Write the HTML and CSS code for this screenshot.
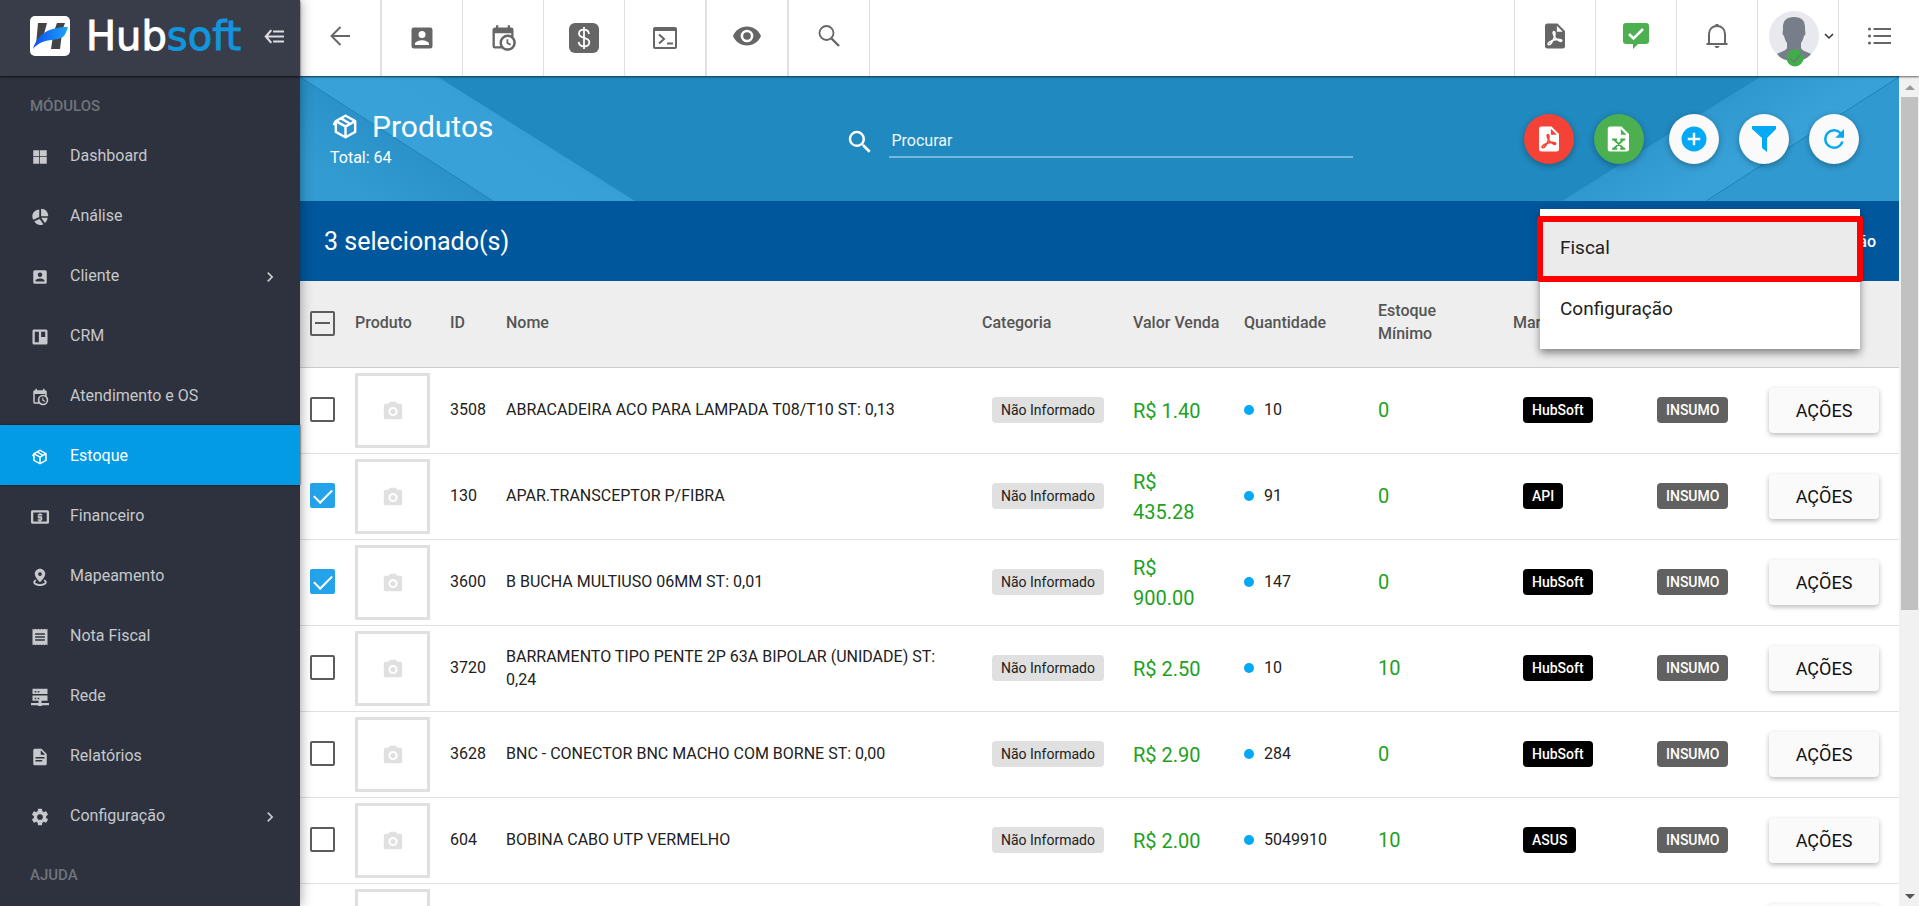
FILE: index.html
```html
<!DOCTYPE html>
<html lang="pt-BR">
<head>
<meta charset="utf-8">
<title>Hubsoft - Produtos</title>
<link rel="stylesheet" href="styles.css">
</head>
<body>
<svg class="sprite" aria-hidden="true">
  <symbol id="i-contact" viewBox="0 0 24 24"><path d="M6 17c0-2 4-3.100 6-3.100s6 1.100 6 3.100v1H6m9-9a3 3 0 0 1-3 3 3 3 0 0 1-3-3 3 3 0 0 1 3-3 3 3 0 0 1 3 3M3 5v14a2 2 0 0 0 2 2h14a2 2 0 0 0 2-2V5a2 2 0 0 0-2-2H5a2 2 0 0 0-2 2z"/></symbol>
  <symbol id="i-calendar" viewBox="0 0 24 24"><path d="M15 13h1.500v2.820l2.440 1.410-.750 1.300L15 16.690V13m4-5H5v11h4.670c-.430-.910-.670-1.930-.670-3a7 7 0 0 1 7-7c1.070 0 2.090.240 3 .670V8M5 21a2 2 0 0 1-2-2V5c0-1.110.890-2 2-2h1V1h2v2h8V1h2v2h1a2 2 0 0 1 2 2v6.100c1.240 1.260 2 2.990 2 4.900a7 7 0 0 1-7 7c-1.910 0-3.640-.760-4.900-2H5m11-9.850A4.850 4.850 0 0 0 11.150 16c0 2.680 2.170 4.850 4.850 4.850A4.850 4.850 0 0 0 20.850 16c0-2.680-2.170-4.850-4.850-4.850z"/></symbol>
  <symbol id="i-box" viewBox="0 0 24 24"><path d="M2 10.960a.985.985 0 0 1-.370-1.370L3.130 7c.110-.200.280-.340.470-.420l7.830-4.400c.160-.120.360-.180.570-.180s.410.060.570.180l7.900 4.440c.190.100.350.260.440.460l.090.300V16.500c0 .380-.210.710-.530.880l-7.900 4.440c-.160.120-.360.180-.570.180s-.410-.060-.570-.180l-7.900-4.440A.991.991 0 0 1 3 16.500V10.960M12 4.150l-1.890 1.070L16 8.610 17.960 7.500 12 4.150M6.040 7.500 12 10.850l1.960-1.100-5.880-3.400L6.040 7.500M5 15.910l6 3.380v-6.710L5 9.210v6.700m14 0v-6.700l-6 3.370v6.710l6-3.380z"/></symbol>
  <symbol id="i-search" viewBox="0 0 24 24"><path d="M9.500 3A6.500 6.500 0 0 1 16 9.500c0 1.610-.590 3.090-1.560 4.230l.270.270h.790l5 5-1.500 1.500-5-5v-.790l-.270-.270A6.516 6.516 0 0 1 9.500 16 6.500 6.500 0 0 1 3 9.500 6.500 6.500 0 0 1 9.500 3m0 2C7 5 5 7 5 9.500S7 14 9.500 14 14 12 14 9.500 12 5 9.500 5z"/></symbol>
  <symbol id="i-pdf" viewBox="0 0 24 24"><path fill-rule="evenodd" d="M14 2H6a2 2 0 0 0-2 2v16a2 2 0 0 0 2 2h12a2 2 0 0 0 2-2V8l-6-6zM13.500 3.800 18.200 8.500H13.500z"/><path class="cut" d="M10.800 8.600c1.500-.5 1.500 2.200.6 4.600-.9 2.500-3 6.300-4.600 5.700-1.500-.7 1.800-3.200 5.200-3.900 2.700-.5 5.600-.3 5.400.9-.3 1.200-3.500-.4-5.200-2.600-1.300-1.800-2.200-4.400-1.400-4.700z"/></symbol>
  <symbol id="i-camera" viewBox="0 0 24 24"><path fill-rule="evenodd" d="M4 4h3l2-2h6l2 2h3a2 2 0 0 1 2 2v13a2 2 0 0 1-2 2H4a2 2 0 0 1-2-2V6a2 2 0 0 1 2-2m8 3.500a5 5 0 0 0-5 5 5 5 0 0 0 5 5 5 5 0 0 0 5-5 5 5 0 0 0-5-5z"/><circle cx="12" cy="12.500" r="2.800"/></symbol>
  <symbol id="i-chevron" viewBox="0 0 24 24"><path d="M8.590 16.580 13.170 12 8.590 7.410 10 6l6 6-6 6-1.410-1.420z"/></symbol>
</svg>

<div class="app">
  <aside class="sidebar">
    <header class="brand">
      <svg class="brand-mark" viewBox="0 0 40 40" aria-hidden="true">
        <defs><linearGradient id="swoosh" x1="0" x2="1"><stop offset="0" stop-color="#0a4ef0"/><stop offset="1" stop-color="#1ea4fa"/></linearGradient></defs>
        <rect width="40" height="40" rx="5" fill="#fff"/>
        <path fill="#444" d="M8 7h9l-3 11-4 3-4 8zM27 7h8l-3 8H24zM23 20l9-3-2 16h-9z"/>
        <path fill="url(#swoosh)" d="M3 33C8 17 20 11 38 11c-2 6-3 9-7 11-7 3-19 0-28 11z"/>
      </svg>
      <span class="brand-name">Hub<span class="brand-accent">soft</span></span>
      <button class="icon-button collapse" aria-label="Recolher menu">
        <svg viewBox="0 0 22 16"><path d="M8 1 2 8l6 7M3 8h19M10 2.500h12M10 13.500h12" fill="none" stroke="currentColor" stroke-width="2.400"/></svg>
      </button>
    </header>
    <nav class="nav">
      <h2 class="nav-title">MÓDULOS</h2>
      <a class="nav-item" href="#"><svg viewBox="0 0 24 24"><path d="M3 11h8V3H3m0 18h8v-9H3m9 9h9v-9h-9m0-9v8h9V3"/></svg><span>Dashboard</span></a>
      <a class="nav-item" href="#"><svg viewBox="0 0 24 24"><path d="M11 2v10L3 15.500C-.500 9 4 2.500 11 2zM13.500 1C19 1 23 5 23 11h-9.500zM13.500 13H22c0 3-1.500 5.500-3.500 7l-5-7zM11.500 14.500l5 7c-4.500 2.500-9.500.8-12-4z"/></svg><span>Análise</span></a>
      <a class="nav-item" href="#"><svg><use href="#i-contact"/></svg><span>Cliente</span><svg class="nav-arrow"><use href="#i-chevron"/></svg></a>
      <a class="nav-item" href="#"><svg viewBox="0 0 24 24"><path fill-rule="evenodd" d="M4 2h16a2 2 0 0 1 2 2v16a2 2 0 0 1-2 2H4a2 2 0 0 1-2-2V4c0-1.100.9-2 2-2zM5 5v14h5.500V5zM13.500 5v7H19V5z"/></svg><span>CRM</span></a>
      <a class="nav-item" href="#"><svg><use href="#i-calendar"/></svg><span>Atendimento e OS</span></a>
      <a class="nav-item active" href="#" aria-current="page"><svg><use href="#i-box"/></svg><span>Estoque</span></a>
      <a class="nav-item" href="#"><svg viewBox="0 0 24 24"><path fill-rule="evenodd" d="M2 3h20a2 2 0 0 1 2 2v14a2 2 0 0 1-2 2H2a2 2 0 0 1-2-2V5c0-1.100.9-2 2-2zm1 3v12h18V6zM11 7h2v1h2v2h-5v1h4l1 1v4l-1 1h-1v1h-2v-1H9v-2h4v-1h-3l-1-1V9l1-1h1z"/></svg><span>Financeiro</span></a>
      <a class="nav-item" href="#"><svg viewBox="0 0 24 24"><path d="M12 1c3.900 0 7 3.100 7 6.800C19 13 12 19 12 19S5 13 5 7.800C5 4.100 8.100 1 12 1m0 4.500a2.400 2.400 0 0 0 0 5 2.400 2.400 0 0 0 0-5M21 19c0 2.800-4 5-9 5s-9-2.200-9-5c0-1.500 1.100-2.900 3-3.800l1.200 1.700c-1 .5-1.700 1.200-1.700 1.900 0 1.500 3 2.700 6.500 2.700s6.500-1.200 6.500-2.700c0-.7-.7-1.400-1.700-1.900l1.200-1.700c1.900.9 3 2.300 3 3.800z"/></svg><span>Mapeamento</span></a>
      <a class="nav-item" href="#"><svg viewBox="0 0 24 24"><path fill-rule="evenodd" d="M2 1l2 1 2-1 2 1 2-1 2 1 2-1 2 1 2-1 2 1 2-1v22l-2-1-2 1-2-1-2 1-2-1-2 1-2-1-2 1-2-1-2 1zM5.500 7v2h13V7zM5.500 11v2h13v-2zM5.500 15v2h13v-2z"/></svg><span>Nota Fiscal</span></a>
      <a class="nav-item" href="#"><svg viewBox="0 0 24 24"><path fill-rule="evenodd" d="M2 1h20v7H2zM2 10h20v7H2zM5 4v2h2V4zM9 4v2h2V4zM5 13v2h2v-2zM9 13v2h2v-2zM10 17h4v3h10v3h-9l-1 1h-4l-1-1H0v-3h10z"/></svg><span>Rede</span></a>
      <a class="nav-item" href="#"><svg viewBox="0 0 24 24"><path fill-rule="evenodd" d="M14 1H5a2 2 0 0 0-2 2v18a2 2 0 0 0 2 2h14a2 2 0 0 0 2-2V8zM13 3l6 6h-6zM6 12v2h12v-2zM6 16v2h9v-2z"/></svg><span>Relatórios</span></a>
      <a class="nav-item" href="#"><svg viewBox="1 1 22 22"><path d="M12 15.500A3.500 3.500 0 0 1 8.500 12 3.500 3.500 0 0 1 12 8.500a3.500 3.500 0 0 1 3.500 3.500 3.500 3.500 0 0 1-3.500 3.500m7.430-2.530c.040-.320.070-.640.070-.970s-.030-.660-.070-1l2.110-1.630c.190-.150.240-.420.120-.640l-2-3.460c-.120-.220-.390-.310-.610-.220l-2.490 1c-.520-.390-1.060-.730-1.690-.980l-.370-2.650A.506.506 0 0 0 14 2h-4c-.250 0-.460.180-.500.420l-.370 2.650c-.630.250-1.170.590-1.690.980l-2.490-1c-.220-.090-.490 0-.610.220l-2 3.460c-.130.220-.070.490.120.640L4.570 11c-.040.340-.070.670-.070 1s.030.650.070.970l-2.110 1.660c-.190.150-.250.420-.120.640l2 3.460c.120.220.390.300.610.220l2.490-1.010c.520.400 1.060.740 1.690.990l.370 2.650c.040.240.250.420.500.420h4c.250 0 .460-.180.500-.420l.370-2.650c.630-.260 1.170-.590 1.690-.990l2.490 1.010c.220.080.490 0 .610-.220l2-3.460c.120-.220.070-.490-.120-.640l-2.110-1.660z"/></svg><span>Configuração</span><svg class="nav-arrow"><use href="#i-chevron"/></svg></a>
      <h2 class="nav-title">AJUDA</h2>
    </nav>
  </aside>

  <div class="workspace">
    <header class="topbar">
      <button class="tool strong" aria-label="Voltar"><svg viewBox="0 0 20 20"><path d="M20 10H2M10.500 1 1.500 10l9 9" fill="none" stroke="currentColor" stroke-width="2"/></svg></button>
      <button class="tool low" aria-label="Clientes"><svg class="i-28"><use href="#i-contact"/></svg></button>
      <button class="tool low" aria-label="Agenda"><svg class="i-28"><use href="#i-calendar"/></svg></button>
      <button class="tool low" aria-label="Financeiro"><svg class="i-30" viewBox="0 0 30 30"><rect width="30" height="30" rx="6"/><path d="M20 11c-.4-3-2.300-4.300-5-4.300s-5 1.400-5 4.100c0 5.400 10.300 2.800 10.300 8.300 0 2.800-2.300 4.400-5.200 4.400S10 22 9.600 18.900M15 4v22" fill="none" stroke="#fff" stroke-width="1.800"/></svg></button>
      <button class="tool low strong" aria-label="Terminal"><svg class="i-28" viewBox="0 0 28 28"><path fill-rule="evenodd" d="M4 3h20a2 2 0 0 1 2 2v18a2 2 0 0 1-2 2H4a2 2 0 0 1-2-2V5c0-1.100.9-2 2-2zm0 4v16h20V7z"/><path d="m8 10.500 5 4.500-5 4.500M16 19.500h6" fill="none" stroke="currentColor" stroke-width="2"/></svg></button>
      <button class="tool strong" aria-label="Visualizar"><svg class="i-28" viewBox="1 1 22 22"><path d="M12 9a3 3 0 0 0-3 3 3 3 0 0 0 3 3 3 3 0 0 0 3-3 3 3 0 0 0-3-3m0 8a5 5 0 0 1-5-5 5 5 0 0 1 5-5 5 5 0 0 1 5 5 5 5 0 0 1-5 5m0-12.500C7 4.500 2.730 7.610 1 12c1.730 4.390 6 7.500 11 7.500s9.270-3.110 11-7.500c-1.730-4.390-6-7.500-11-7.500z"/></svg></button>
      <button class="tool" aria-label="Buscar"><svg class="i-22" viewBox="0 0 22 22"><circle cx="8.500" cy="8" r="7" fill="none" stroke="currentColor" stroke-width="1.800"/><path d="m13.500 13.500 7.500 7.500" stroke="currentColor" stroke-width="2.400"/></svg></button>
      <div class="tools-end">
        <button class="tool" aria-label="Relatórios PDF"><svg class="i-30"><use href="#i-pdf"/></svg></button>
        <button class="tool" aria-label="Mensagens"><svg class="i-26" viewBox="0 0 26 26"><path fill="#4caf50" d="M3 0h20a3 3 0 0 1 3 3v15a3 3 0 0 1-3 3h-8l-5 5v-5H3a3 3 0 0 1-3-3V3a3 3 0 0 1 3-3z"/><path d="m6 11 4.500 4.500L20 6" fill="none" stroke="#fff" stroke-width="2.600"/></svg></button>
        <button class="tool" aria-label="Notificações"><svg class="i-26" viewBox="0 0 26 26"><path d="M2.500 21h21M5 20V11c0-5 3.500-8 8-8s8 3 8 8v9" fill="none" stroke="currentColor" stroke-width="2"/><path d="M11.500 1h3v2h-3zM10.500 23h5c-.5 1.500-1.500 2-2.500 2s-2-.5-2.500-2z"/></svg></button>
        <button class="tool profile" aria-label="Perfil">
          <svg class="avatar" viewBox="0 0 50 56"><circle cx="25" cy="25" r="25" fill="#e8e9ee"/><path fill="#777e8a" d="M25 6c-8 0-11.500 4-11 12l-.5 5 1.500 2c1 4 2 5.500 3 7v5c-1 3-7 4-10 6 4 5 10 7 17 7s13-2 17-7c-3-2-9-3-10-6v-5c1-1.500 2-3 3-7l1.500-2-.5-5c.5-8-3-12-11-12z"/><circle cx="26" cy="47" r="8.500" fill="#3fae46"/><path d="m21 47 4 4 7-8" fill="none" stroke="#6c7881" stroke-width="1.500"/></svg>
          <svg class="caret" viewBox="0 0 10 10"><path d="m1 3 4 4 4-4" fill="none" stroke="#333" stroke-width="1.500"/></svg>
        </button>
        <button class="tool" aria-label="Lista"><svg class="i-24" viewBox="0 0 24 20"><path d="M6.500 3H24M6.500 10H24M6.500 17H24" stroke="currentColor" stroke-width="2"/><circle cx="2.500" cy="3" r="1.600"/><circle cx="2.500" cy="10" r="1.600"/><circle cx="2.500" cy="17" r="1.600"/></svg></button>
      </div>
    </header>

    <div class="scroll-area">
      <main class="page">
        <section class="page-header">
          <svg class="rays rays-left" viewBox="0 0 335 124" aria-hidden="true">
            <defs>
              <linearGradient id="band" gradientUnits="userSpaceOnUse" x1="198" y1="90" x2="240" y2="24"><stop offset="0" stop-color="#38a1d8"/><stop offset=".45" stop-color="#36a0d7"/><stop offset="1" stop-color="#2e98cf"/></linearGradient>
              <linearGradient id="corner" gradientUnits="userSpaceOnUse" x1="60" y1="118" x2="97" y2="62"><stop offset="0" stop-color="#329bd2"/><stop offset="1" stop-color="#2a92c8"/></linearGradient>
            </defs>
            <path fill="url(#band)" d="M0 0h138l197 124H0z"/>
            <path fill="url(#corner)" d="M0 0l193 124H0z"/>
            <path d="m0 0 193 124" stroke="#1f83b9"/>
          </svg>
          <svg class="rays rays-right" viewBox="0 0 337 124" aria-hidden="true">
            <defs><linearGradient id="bandr" gradientUnits="userSpaceOnUse" x1="85" y1="50" x2="125" y2="114"><stop offset="0" stop-color="#2c95cc"/><stop offset="1" stop-color="#38a1d8"/></linearGradient></defs>
            <path fill="url(#bandr)" d="M198 0h139v124H0z"/>
            <path fill="#2f99d0" d="M337 0v124H144z"/>
            <path d="M337 0 144 124" stroke="#1f83b9"/>
          </svg>
          <div class="heading">
            <h1 class="title"><svg><use href="#i-box"/></svg>Produtos</h1>
            <p class="total">Total: 64</p>
          </div>
          <div class="search">
            <label for="q" aria-label="Procurar"><svg><use href="#i-search"/></svg></label>
            <input id="q" type="text" placeholder="Procurar">
          </div>
          <div class="fabs">
            <button class="fab red" aria-label="Exportar PDF"><svg class="i-30"><use href="#i-pdf"/></svg></button>
            <button class="fab green" aria-label="Exportar planilha"><svg class="i-30" viewBox="0 0 24 24"><path fill-rule="evenodd" d="M14 2H5a2 2 0 0 0-2 2v16a2 2 0 0 0 2 2h13a2 2 0 0 0 2-2V8zM13.500 4 18 8.500h-4.500z"/><path d="m8 12.500 7.500 7M15.500 12.500 8 19.500M6.500 12.300h4M13 12.300h4M6.500 19.700h4M13 19.700h4" fill="none" stroke="#3fae46" stroke-width="1.600"/></svg></button>
            <button class="fab gap" aria-label="Adicionar"><svg class="i-30" viewBox="0 0 24 24"><path d="M17 13h-4v4h-2v-4H7v-2h4V7h2v4h4m-5-9A10 10 0 0 0 2 12a10 10 0 0 0 10 10 10 10 0 0 0 10-10A10 10 0 0 0 12 2z"/></svg></button>
            <button class="fab" aria-label="Filtrar"><svg class="i-26" viewBox="0 0 26 26"><path d="M1 0h24v3l-9 9v14l-5-4V12L1 3z"/></svg></button>
            <button class="fab" aria-label="Atualizar"><svg class="i-30" viewBox="0 0 24 24"><path d="M17.650 6.350A7.958 7.958 0 0 0 12 4a8 8 0 0 0-8 8 8 8 0 0 0 8 8c3.730 0 6.840-2.550 7.730-6h-2.080A5.990 5.990 0 0 1 12 18a6 6 0 0 1-6-6 6 6 0 0 1 6-6c1.660 0 3.140.690 4.220 1.780L13 11h7V4l-2.350 2.350z"/></svg></button>
          </div>
        </section>

        <section class="selection">
          <h2 class="selection-count">3 selecionado(s)</h2>
          <button class="selection-action">Ação</button>
          <div class="menu" role="menu">
            <button class="menu-item highlighted" role="menuitem">Fiscal</button>
            <button class="menu-item" role="menuitem">Configuração</button>
          </div>
        </section>

        <table class="products">
          <colgroup><col class="c-check"><col class="c-photo"><col class="c-id"><col><col class="c-category"><col class="c-price"><col class="c-qty"><col class="c-min"><col class="c-brand"><col class="c-type"><col class="c-actions"></colgroup>
          <thead>
            <tr><th><input class="check partial" type="checkbox" aria-label="Selecionar todos"></th><th>Produto</th><th>ID</th><th>Nome</th><th>Categoria</th><th>Valor Venda</th><th>Quantidade</th><th class="min">Estoque Mínimo</th><th>Marca</th><th></th><th></th></tr>
          </thead>
          <tbody>
            <tr><td><input class="check" type="checkbox" aria-label="Selecionar 3508"></td><td><div class="photo"><svg><use href="#i-camera"/></svg></div></td><td class="text">3508</td><td class="text name">ABRACADEIRA ACO PARA LAMPADA T08/T10 ST: 0,13</td><td><span class="badge">Não Informado</span></td><td class="price">R$ 1.40</td><td><span class="qty">10</span></td><td class="amount">0</td><td><span class="badge brand-badge">HubSoft</span></td><td><span class="badge type">INSUMO</span></td><td><button class="action">AÇÕES</button></td></tr>
            <tr><td><input class="check" type="checkbox" checked aria-label="Selecionar 130"></td><td><div class="photo"><svg><use href="#i-camera"/></svg></div></td><td class="text">130</td><td class="text name">APAR.TRANSCEPTOR P/FIBRA</td><td><span class="badge">Não Informado</span></td><td class="price">R$ 435.28</td><td><span class="qty">91</span></td><td class="amount">0</td><td><span class="badge brand-badge">API</span></td><td><span class="badge type">INSUMO</span></td><td><button class="action">AÇÕES</button></td></tr>
            <tr><td><input class="check" type="checkbox" checked aria-label="Selecionar 3600"></td><td><div class="photo"><svg><use href="#i-camera"/></svg></div></td><td class="text">3600</td><td class="text name">B BUCHA MULTIUSO 06MM ST: 0,01</td><td><span class="badge">Não Informado</span></td><td class="price">R$ 900.00</td><td><span class="qty">147</span></td><td class="amount">0</td><td><span class="badge brand-badge">HubSoft</span></td><td><span class="badge type">INSUMO</span></td><td><button class="action">AÇÕES</button></td></tr>
            <tr><td><input class="check" type="checkbox" aria-label="Selecionar 3720"></td><td><div class="photo"><svg><use href="#i-camera"/></svg></div></td><td class="text">3720</td><td class="text name">BARRAMENTO TIPO PENTE 2P 63A BIPOLAR (UNIDADE) ST: 0,24</td><td><span class="badge">Não Informado</span></td><td class="price">R$ 2.50</td><td><span class="qty">10</span></td><td class="amount">10</td><td><span class="badge brand-badge">HubSoft</span></td><td><span class="badge type">INSUMO</span></td><td><button class="action">AÇÕES</button></td></tr>
            <tr><td><input class="check" type="checkbox" aria-label="Selecionar 3628"></td><td><div class="photo"><svg><use href="#i-camera"/></svg></div></td><td class="text">3628</td><td class="text name">BNC - CONECTOR BNC MACHO COM BORNE ST: 0,00</td><td><span class="badge">Não Informado</span></td><td class="price">R$ 2.90</td><td><span class="qty">284</span></td><td class="amount">0</td><td><span class="badge brand-badge">HubSoft</span></td><td><span class="badge type">INSUMO</span></td><td><button class="action">AÇÕES</button></td></tr>
            <tr><td><input class="check" type="checkbox" aria-label="Selecionar 604"></td><td><div class="photo"><svg><use href="#i-camera"/></svg></div></td><td class="text">604</td><td class="text name">BOBINA CABO UTP VERMELHO</td><td><span class="badge">Não Informado</span></td><td class="price">R$ 2.00</td><td><span class="qty">5049910</span></td><td class="amount">10</td><td><span class="badge brand-badge">ASUS</span></td><td><span class="badge type">INSUMO</span></td><td><button class="action">AÇÕES</button></td></tr>
            <tr><td></td><td><div class="photo"></div></td><td></td><td></td><td></td><td></td><td></td><td></td><td></td><td></td><td><button class="action" aria-label="Ações"></button></td></tr>
          </tbody>
        </table>
      </main>
      <div class="scrollbar" aria-hidden="true"><i class="arrow up"></i><div class="track"><div class="thumb"></div></div><i class="arrow down"></i></div>
    </div>
  </div>
</div>
</body>
</html>
```
FILE: styles.css
```css
* { box-sizing: border-box; }

body {
  margin: 0;
  font-family: Roboto, "Liberation Sans", sans-serif;
  font-size: 16px;
  color: #212121;
}

h1, h2, p { margin: 0; font-weight: 400; }
button { font: inherit; border: 0; padding: 0; background: none; color: inherit; }
svg { fill: currentColor; display: block; flex: none; }
.sprite { position: absolute; width: 0; height: 0; }
.cut { fill: none; stroke: var(--cut, #fff); stroke-width: 1.3px; }

.i-22 { width: 22px; height: 22px; }
.i-24 { width: 24px; height: 20px; }
.i-26 { width: 26px; height: 26px; }
.i-28 { width: 28px; height: 28px; }
.i-30 { width: 30px; height: 30px; }

.app { display: flex; height: 100vh; overflow: hidden; }

/* Sidebar */
.sidebar {
  position: relative;
  z-index: 2;
  flex: 0 0 300px;
  background: #2d323e;
  color: #c6c8cb;
  box-shadow: 0 0 12px rgba(0, 0, 0, .4);
}
.brand {
  display: flex;
  align-items: center;
  height: 76px;
  padding: 0 16px 4px 30px;
  background: #393c49;
  box-shadow: 0 1px 2px rgba(0, 0, 0, .7);
}
.brand-mark { width: 40px; height: 40px; }
.brand-name {
  flex: 1;
  padding-left: 16px;
  font: 40px/40px "DejaVu Sans", sans-serif;
  -webkit-text-stroke: 1px;
  color: #fff;
}
.brand-accent { color: #1295dc; }
.collapse svg { width: 20px; height: 15px; color: #dcdde0; }

.nav-title {
  padding: 21px 30px 9px;
  font-size: 15px;
  line-height: 19px;
  font-weight: 500;
  color: #70747c;
}
.nav-item {
  display: flex;
  align-items: center;
  height: 60px;
  padding: 0 20px 0 31px;
  color: inherit;
  text-decoration: none;
}
.nav-item svg { width: 18px; height: 18px; margin-top: 4px; }
.nav-item span { flex: 1; padding-left: 21px; }
.nav-item .nav-arrow { width: 20px; height: 20px; }
.nav-item.active {
  background: #039be5;
  color: #fff;
  box-shadow: 0 0 2px #111;
}

/* Top bar */
.workspace { flex: 1; min-width: 0; display: flex; flex-direction: column; }
.topbar {
  position: relative;
  z-index: 1;
  display: flex;
  flex: 0 0 76px;
  background: #fff;
  color: #666;
  box-shadow: 0 1px 2px rgba(0, 0, 0, .6);
}
.tool {
  display: flex;
  align-items: center;
  justify-content: center;
  width: 81px;
  padding-bottom: 4px;
  border-right: 1px solid #e0e0e0;
}
.tool.low { padding-bottom: 0; }
.tool.strong { width: 82px; border-right-width: 2px; }
.tool > svg:not([class]) { width: 20px; height: 20px; }
.tools-end { display: flex; margin-left: auto; }
.tools-end .tool { border-right: 0; border-left: 1px solid #e0e0e0; }
.profile { gap: 5px; padding-left: 6px; }
.avatar { width: 50px; height: 56px; margin-top: 6px; }
.caret { width: 10px; height: 10px; }

/* Content */
.scroll-area { flex: 1; min-height: 0; display: flex; }
.page { flex: 1; min-width: 0; overflow: hidden; background: #fff; }

.page-header {
  position: relative;
  display: grid;
  grid-template-columns: 1fr 516px 1fr;
  align-items: center;
  height: 125px;
  padding: 0 40px 0 30px;
  background: #2089bf;
  color: #fff;
}
.page-header > * { position: relative; }
.page-header > .rays { position: absolute; top: 1px; height: 124px; }
.rays-left { left: 0; }
.rays-right { right: 0; }
.title {
  display: flex;
  align-items: center;
  gap: 12px;
  padding-left: 1px;
  font-size: 30px;
  line-height: 38px;
}
.title svg { width: 29px; height: 29px; }
.total { line-height: 24px; }
.search { display: flex; align-items: center; gap: 14px; padding: 6px 0 0 8px; }
.search svg { width: 30px; height: 30px; }
.search input {
  flex: 1;
  min-width: 0;
  height: 32px;
  padding: 0 3px;
  border: 0;
  border-bottom: 2px solid #72b8dc;
  outline: 0;
  background: none;
  color: #fff;
  font: inherit;
}
.search input::placeholder { color: #f2f8fc; opacity: 1; }
.fabs { display: flex; justify-content: flex-end; gap: 20px; }
.fab {
  display: flex;
  align-items: center;
  justify-content: center;
  width: 50px;
  height: 50px;
  border-radius: 50%;
  background: #fafafa;
  color: #03a9f4;
  box-shadow: 0 2px 6px rgba(0, 0, 0, .3);
}
.fab.gap { margin-left: 5px; }
.fab.red { background: #f44336; color: #fff; --cut: #f44336; }
.fab.green { background: #4caf50; color: #fff; }

.selection {
  position: relative;
  display: flex;
  align-items: center;
  justify-content: space-between;
  height: 80px;
  padding: 0 23px 0 24px;
  background: #01579b;
  color: #fff;
}
.selection-count { font-size: 25px; }
.selection-action { font-weight: 500; }

.menu {
  position: absolute;
  z-index: 1;
  top: 8px;
  right: 39px;
  width: 320px;
  padding: 8px 0 10px;
  background: #fff;
  color: #212121;
  box-shadow: 0 4px 8px rgba(0, 0, 0, .45);
}
.menu-item {
  position: relative;
  display: block;
  width: 100%;
  height: 61px;
  padding: 0 20px;
  font-size: 19px;
  text-align: left;
}
.menu-item.highlighted { background: #ebebeb; }
.menu-item.highlighted::after {
  content: "";
  position: absolute;
  inset: -1px -3px -4px;
  border: 6px solid #f00;
  border-radius: 3px;
}

/* Table */
.products { width: 100%; table-layout: fixed; border-collapse: separate; border-spacing: 0; }
.c-check { width: 55px; }
.c-photo { width: 95px; }
.c-id { width: 56px; }
.c-category { width: 151px; }
.c-price { width: 111px; }
.c-qty { width: 134px; }
.c-min { width: 135px; }
.c-brand { width: 134px; }
.c-type { width: 110px; }
.c-actions { width: 142px; }
.products th {
  height: 87px;
  padding: 0 0 4px;
  border-bottom: 1px solid #ccc;
  background: #eee;
  color: #555;
  font-weight: 500;
  line-height: 23px;
  text-align: left;
}
.products th:first-child { padding-bottom: 0; }
.products th.min { padding-right: 50px; }
.products td {
  height: 86px;
  padding: 0;
  border-bottom: 1px solid #e0e0e0;
  line-height: 23px;
}
.products .text { padding-bottom: 2px; }
.products .name { padding-right: 24px; }
.products .price { padding-right: 24px; font-size: 20px; line-height: 30px; color: #21a121; }
.products .amount { font-size: 20px; color: #21a121; }

.check {
  appearance: none;
  display: grid;
  place-items: center;
  width: 25px;
  height: 25px;
  margin: 0 0 2px 10px;
  border: 2px solid #5c5c5c;
  border-radius: 2px;
}
.check:checked { border-color: #24a3ea; background: #24a3ea; }
.check:checked::before {
  content: "";
  width: 8px;
  height: 16px;
  margin-bottom: 6px;
  border: solid #fff;
  border-width: 0 2px 2px 0;
  rotate: 45deg;
}
.check.partial::before { content: ""; width: 15px; height: 2px; background: #5c5c5c; }

.photo {
  display: grid;
  place-items: center;
  width: 75px;
  height: 75px;
  border: 3px solid #e0e0e0;
  color: #e0e0e0;
}
.photo svg { width: 24px; height: 22px; }

.badge {
  display: inline-block;
  margin: 0 0 2px 10px;
  padding: 0 9px;
  border-radius: 4px;
  background: #e0e0e0;
  font-size: 14px;
  line-height: 26px;
  vertical-align: middle;
}
.brand-badge { background: #000; color: #fff; font-weight: 500; }
.type { background: #616161; color: #fff; font-weight: 500; }

.qty { display: flex; align-items: center; gap: 10px; padding-bottom: 2px; }
.qty::before { content: ""; width: 10px; height: 10px; border-radius: 50%; background: #03a9f4; }

.action {
  display: block;
  width: 110px;
  height: 45px;
  margin-left: 12px;
  border-radius: 4px;
  background: #fafafa;
  box-shadow: 0 2px 5px rgba(0, 0, 0, .28);
  color: #111;
  font-size: 18px;
}

/* Scrollbar */
.scrollbar {
  display: flex;
  flex-direction: column;
  width: 20px;
  padding: 1px 1px 0 2px;
  background: #f1f1f1;
}
.arrow { height: 20px; display: grid; place-items: center; }
.arrow::before { content: ""; border: 5px solid transparent; }
.up::before { border-bottom-color: #999; margin-bottom: 5px; }
.down::before { border-top-color: #555; margin-top: 5px; }
.track { flex: 1; }
.thumb { height: 65%; background: #c1c1c1; }
```
